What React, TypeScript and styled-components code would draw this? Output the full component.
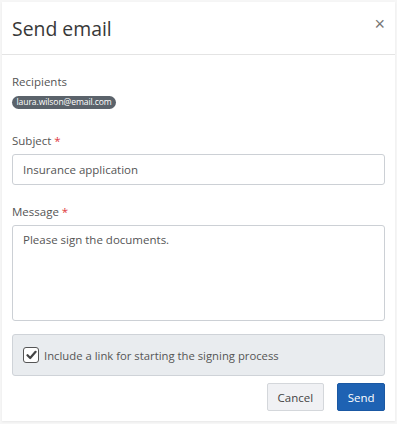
import React from 'react';
import styled, { createGlobalStyle } from 'styled-components';

const GlobalStyle = createGlobalStyle`
  body {
    margin: 0;
    background: #f6f6f6;
    font-family: 'Open Sans', 'Noto Sans', sans-serif;
  }
`;

function App() {
  return (
    <>
      <GlobalStyle />
      <Page>
        <Dialog>
          <Header>
            <Title>Send email</Title>
            <CloseBtn aria-label="Close">×</CloseBtn>
          </Header>
          <Body>
            <Label>Recipients</Label>
            <Badges>
              <Badge>laura.wilson@email.com</Badge>
            </Badges>
            <Label>
              Subject <Req>*</Req>
            </Label>
            <Input defaultValue="Insurance application" />
            <Label>
              Message <Req>*</Req>
            </Label>
            <TextArea defaultValue="Please sign the documents." />
            <CheckPanel>
              <CheckBox>
                <svg width="11" height="10" viewBox="0 0 11 10">
                  <path d="M1.5 5.2 L4.2 8 L9.6 1.8" fill="none" stroke="#444" strokeWidth="2.2" strokeLinecap="round" strokeLinejoin="round" />
                </svg>
              </CheckBox>
              <span>Include a link for starting the signing process</span>
            </CheckPanel>
            <Footer>
              <Button>Cancel</Button>
              <Button $primary>Send</Button>
            </Footer>
          </Body>
        </Dialog>
      </Page>
    </>
  );
}

const Page = styled.div`
  padding: 2px;
  width: 397px;
  box-sizing: border-box;
`;

const Dialog = styled.div`
  background: #fff;
  box-shadow: 0 1px 2px rgba(0, 0, 0, 0.06);
  height: 419px;
`;

const Header = styled.header`
  display: flex;
  justify-content: space-between;
  align-items: center;
  height: 52px;
  padding: 0 10px;
  border-bottom: 1px solid #e4e4e4;
`;

const Title = styled.h1`
  margin: 0;
  font-size: 19.4px;
  font-weight: 400;
  color: #383838;
`;

const CloseBtn = styled.button`
  border: 0;
  background: none;
  padding: 0;
  font-size: 18px;
  line-height: 1;
  color: #777;
  margin-top: -8px;
`;

const Body = styled.div`
  padding: 18px 10px 0;
  font-size: 11.5px;
  color: #444;
`;

const Label = styled.div`
  font-size: 11.5px;
  line-height: 18px;
  color: #555;
  margin-bottom: 4px;
`;

const Req = styled.span`
  color: #e0393e;
`;

const Badges = styled.div`
  display: flex;
  margin-bottom: 23px;
  margin-top: 5px;
`;

const Badge = styled.span`
  background: #5b636b;
  color: #fff;
  font-size: 8.6px;
  line-height: 13px;
  padding: 0 4.5px;
  border-radius: 7px;
  letter-spacing: -0.1px;
`;

const Input = styled.input`
  display: block;
  box-sizing: border-box;
  width: 100%;
  height: 31px;
  border: 1px solid #ccd0d5;
  border-radius: 3px;
  padding: 0 10px;
  font: inherit;
  font-size: 11.5px;
  color: #555;
  margin-bottom: 18px;
`;

const TextArea = styled.textarea`
  display: block;
  box-sizing: border-box;
  width: 100%;
  height: 96px;
  border: 1px solid #ccd0d5;
  border-radius: 3px;
  padding: 6px 10px;
  font: inherit;
  font-size: 11.5px;
  color: #555;
  resize: none;
  margin-bottom: 13px;
`;

const CheckPanel = styled.label`
  display: flex;
  align-items: center;
  gap: 5px;
  box-sizing: border-box;
  height: 42px;
  padding: 0 10px;
  background: #e9ecef;
  border: 1px solid #cfd3d8;
  border-radius: 3px;
  font-size: 11.3px;
  color: #555;
`;

const CheckBox = styled.span`
  display: inline-flex;
  align-items: center;
  justify-content: center;
  width: 16px;
  height: 16px;
  box-sizing: border-box;
  border: 1px solid #555;
  border-radius: 3px;
  background: #fff;
`;

const Footer = styled.div`
  display: flex;
  justify-content: flex-end;
  gap: 13px;
  margin-top: 7px;
`;

const Button = styled.button<{ $primary?: boolean }>`
  height: 28px;
  padding: 0 ${(p) => (p.$primary ? 9.5 : 10)}px;
  border-radius: 2px;
  font: inherit;
  font-size: 11.5px;
  border: 1px solid ${(p) => (p.$primary ? '#1a58a3' : '#d4d7db')};
  background: ${(p) => (p.$primary ? '#1e62b3' : '#f0f1f4')};
  color: ${(p) => (p.$primary ? '#fff' : '#444')};
`;

export default App;
